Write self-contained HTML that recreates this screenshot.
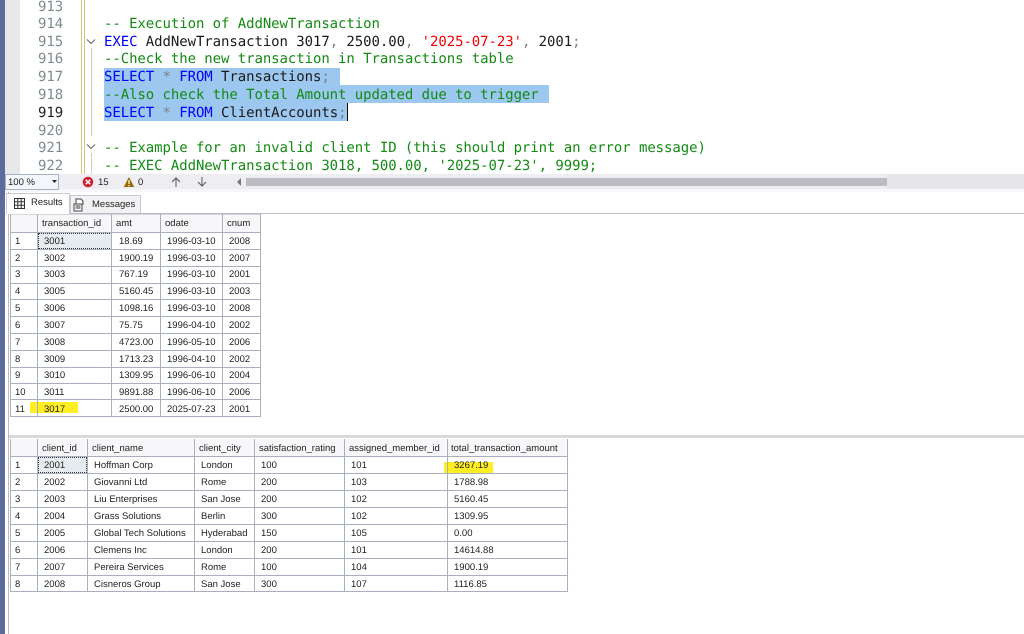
<!DOCTYPE html>
<html><head><meta charset="utf-8"><style>
html,body{margin:0;padding:0;background:#fff}
#p{position:relative;width:1024px;height:634px;overflow:hidden;background:#fff;font-family:"Liberation Sans",sans-serif;filter:blur(.3px);text-rendering:geometricPrecision}
.a{position:absolute}
.c{position:absolute;font:14px/18px "DejaVu Sans Mono","Liberation Mono",monospace;white-space:pre;left:104px;letter-spacing:-.07px;margin-top:1px}
.n{position:absolute;font:14px/18px "DejaVu Sans Mono",monospace;color:#7f8a8f;left:38px;letter-spacing:-.07px;margin-top:1px}
.g{color:#148a14}.b{color:#0000ff}.k{color:#1a1a1a}.s{color:#f00000}.h{color:#808080}
.t{position:absolute;font-size:9.5px;line-height:17px;color:#222;white-space:pre;margin-top:1px}
.l{position:absolute;background:#a8b0be}
.sel{position:absolute;background:#9cc7ef}
</style></head><body><div id="p">
<div class="a" style="left:0;top:0;width:5px;height:634px;background:#5b6b9b"></div>
<div class="a" style="left:5px;top:0;width:15px;height:174px;background:#e8e8ea"></div>
<div class="a" style="left:8px;top:174px;width:1px;height:460px;background:#b8bcc4"></div>
<div class="a" style="left:81px;top:0;width:1px;height:174px;background:#d9c778"></div>
<div class="a" style="left:84px;top:0;width:1px;height:174px;background:#d9c778"></div>

<div class="sel" style="left:104px;top:68px;width:236px;height:17px"></div>
<div class="sel" style="left:104px;top:85px;width:445px;height:18px"></div>
<div class="sel" style="left:104px;top:103px;width:244px;height:18px"></div>
<div class="a" style="left:347px;top:103px;width:1px;height:18px;background:#111"></div>

<div class="n" style="top:-3px">913</div>
<div class="n" style="top:14px">914</div>
<div class="n" style="top:32px">915</div>
<div class="n" style="top:49px">916</div>
<div class="n" style="top:67px">917</div>
<div class="n" style="top:85px">918</div>
<div class="n" style="top:103px;color:#222">919</div>
<div class="n" style="top:121px">920</div>
<div class="n" style="top:138px">921</div>
<div class="n" style="top:156px">922</div>

<svg class="a" style="left:86px;top:37px" width="10" height="10"><path d="M1 2.5l4 4 4-4" fill="none" stroke="#666"/></svg>
<svg class="a" style="left:86px;top:142px" width="10" height="10"><path d="M1 2.5l4 4 4-4" fill="none" stroke="#666"/></svg>
<div class="a" style="left:91px;top:48px;width:1px;height:88px;background:#ccc"></div>
<div class="a" style="left:91px;top:153px;width:1px;height:21px;background:#ccc"></div>

<div class="c g" style="top:14px">-- Execution of AddNewTransaction</div>
<div class="c k" style="top:32px"><span class="b">EXEC</span> AddNewTransaction 3017<span class="h">,</span> 2500.00<span class="h">,</span> <span class="s">'2025-07-23'</span><span class="h">,</span> 2001<span class="h">;</span></div>
<div class="c g" style="top:49px">--Check the new transaction in Transactions table</div>
<div class="c k" style="top:67px"><span class="b">SELECT</span> <span class="h">*</span> <span class="b">FROM</span> Transactions<span class="h">;</span></div>
<div class="c g" style="top:85px">--Also check the Total Amount updated due to trigger</div>
<div class="c k" style="top:103px"><span class="b">SELECT</span> <span class="h">*</span> <span class="b">FROM</span> ClientAccounts<span class="h">;</span></div>
<div class="c g" style="top:138px">-- Example for an invalid client ID (this should print an error message)</div>
<div class="c g" style="top:156px">-- EXEC AddNewTransaction 3018, 500.00, '2025-07-23', 9999;</div>

<!-- status bar -->
<div class="a" style="left:5px;top:174px;width:1019px;height:15px;background:#eeeef2"></div>
<div class="a" style="left:5px;top:189px;width:1019px;height:3px;background:#f6f6fb"></div>
<div class="a" style="left:5px;top:174px;width:54px;height:16px;background:#f4f6fb;border:1px solid #a9b2c4;box-sizing:border-box"></div>
<div class="t" style="left:8px;top:174px;line-height:16px">100 %</div>
<svg class="a" style="left:51px;top:179px" width="8" height="6"><path d="M1 1h5L3.5 4z" fill="#222"/></svg>
<svg class="a" style="left:82px;top:176px" width="12" height="12"><circle cx="6" cy="6" r="5.3" fill="#d4212f"/><path d="M3.8 3.8l4.4 4.4M8.2 3.8L3.8 8.2" stroke="#fff" stroke-width="1.5"/></svg>
<div class="t" style="left:98px;top:174px;line-height:16px">15</div>
<svg class="a" style="left:123px;top:176px" width="12" height="12"><path d="M6 1l5.2 10H.8z" fill="#9a6a00"/><path d="M6 4v4M6 9v1.3" stroke="#fff" stroke-width="1.2"/></svg>
<div class="t" style="left:138px;top:174px;line-height:16px">0</div>
<svg class="a" style="left:170px;top:176px" width="12" height="12"><path d="M6 11V2M2 6l4-4 4 4" fill="none" stroke="#555"/></svg>
<svg class="a" style="left:196px;top:176px" width="12" height="12"><path d="M6 1v9M2 6l4 4 4-4" fill="none" stroke="#555"/></svg>
<svg class="a" style="left:236px;top:178px" width="6" height="8"><path d="M5 0v8L1 4z" fill="#777"/></svg>
<div class="a" style="left:246px;top:178px;width:641px;height:8px;background:#bcbcc2"></div>
<div class="a" style="left:887px;top:174px;width:137px;height:15px;background:#e6e6ea"></div>

<!-- tabs -->
<div class="a" style="left:9px;top:213px;width:1015px;height:1px;background:#b8bcc4"></div>
<div class="a" style="left:6px;top:193px;width:64px;height:21px;background:#fff;border:1px solid #c6cad2;border-bottom:0;box-sizing:border-box"></div>
<div class="a" style="left:70px;top:195px;width:71px;height:18px;background:#f2f2f4;border:1px solid #c6cad2;border-bottom:0;box-sizing:border-box"></div>
<svg class="a" style="left:13px;top:197px" width="13" height="13"><path d="M1.5 1.5h10v10h-10zM1.5 4.8h10M1.5 8.2h10M4.8 1.5v10M8.2 1.5v10" fill="none" stroke="#333"/></svg>
<svg class="a" style="left:73px;top:198px" width="12" height="14"><path d="M3 1h5l2 2v3H3zM1 6h8v7H1z" fill="#fff" stroke="#444"/><path d="M2.5 8h5M2.5 10h5" stroke="#333"/></svg>
<div class="t" style="left:31px;top:193px">Results</div>
<div class="t" style="left:92px;top:195px">Messages</div>

<!-- Table 1 -->
<div class="a" style="left:10px;top:214px;width:251px;height:18px;background:#f7f7f9"></div>
<div class="a" style="left:38px;top:233px;width:74px;height:16px;background:#e6ebef;outline:1px dotted #333;outline-offset:-1px"></div>
<div class="a" style="left:30px;top:402px;width:48px;height:11px;background:#ffee22"></div>
<div id="t1">
<div class="l" style="left:10px;top:214px;width:251px;height:1px;background:#d4d8de"></div>
<div class="l" style="left:10px;top:232px;width:251px;height:1px"></div>
<div class="l" style="left:10px;top:249px;width:251px;height:1px"></div>
<div class="l" style="left:10px;top:266px;width:251px;height:1px"></div>
<div class="l" style="left:10px;top:283px;width:251px;height:1px"></div>
<div class="l" style="left:10px;top:299px;width:251px;height:1px"></div>
<div class="l" style="left:10px;top:316px;width:251px;height:1px"></div>
<div class="l" style="left:10px;top:333px;width:251px;height:1px"></div>
<div class="l" style="left:10px;top:350px;width:251px;height:1px"></div>
<div class="l" style="left:10px;top:367px;width:251px;height:1px"></div>
<div class="l" style="left:10px;top:383px;width:251px;height:1px"></div>
<div class="l" style="left:10px;top:399px;width:251px;height:1px"></div>
<div class="l" style="left:10px;top:416px;width:251px;height:1px"></div>
<div class="l" style="left:10px;top:214px;width:1px;height:203px"></div>
<div class="l" style="left:37px;top:214px;width:1px;height:203px"></div>
<div class="l" style="left:111px;top:214px;width:1px;height:203px"></div>
<div class="l" style="left:160px;top:214px;width:1px;height:203px"></div>
<div class="l" style="left:222px;top:214px;width:1px;height:203px"></div>
<div class="l" style="left:260px;top:214px;width:1px;height:203px"></div>
</div>
<div class="t" style="left:42px;top:214px">transaction_id</div><div class="t" style="left:116px;top:214px">amt</div><div class="t" style="left:165px;top:214px">odate</div><div class="t" style="left:227px;top:214px">cnum</div>
<div class="t" style="left:15px;top:232px">1</div><div class="t" style="left:44px;top:232px">3001</div><div class="t" style="left:119px;top:232px">18.69</div><div class="t" style="left:167px;top:232px">1996-03-10</div><div class="t" style="left:229px;top:232px">2008</div>
<div class="t" style="left:15px;top:249px">2</div><div class="t" style="left:44px;top:249px">3002</div><div class="t" style="left:119px;top:249px">1900.19</div><div class="t" style="left:167px;top:249px">1996-03-10</div><div class="t" style="left:229px;top:249px">2007</div>
<div class="t" style="left:15px;top:265px">3</div><div class="t" style="left:44px;top:265px">3003</div><div class="t" style="left:119px;top:265px">767.19</div><div class="t" style="left:167px;top:265px">1996-03-10</div><div class="t" style="left:229px;top:265px">2001</div>
<div class="t" style="left:15px;top:282px">4</div><div class="t" style="left:44px;top:282px">3005</div><div class="t" style="left:119px;top:282px">5160.45</div><div class="t" style="left:167px;top:282px">1996-03-10</div><div class="t" style="left:229px;top:282px">2003</div>
<div class="t" style="left:15px;top:299px">5</div><div class="t" style="left:44px;top:299px">3006</div><div class="t" style="left:119px;top:299px">1098.16</div><div class="t" style="left:167px;top:299px">1996-03-10</div><div class="t" style="left:229px;top:299px">2008</div>
<div class="t" style="left:15px;top:316px">6</div><div class="t" style="left:44px;top:316px">3007</div><div class="t" style="left:119px;top:316px">75.75</div><div class="t" style="left:167px;top:316px">1996-04-10</div><div class="t" style="left:229px;top:316px">2002</div>
<div class="t" style="left:15px;top:333px">7</div><div class="t" style="left:44px;top:333px">3008</div><div class="t" style="left:119px;top:333px">4723.00</div><div class="t" style="left:167px;top:333px">1996-05-10</div><div class="t" style="left:229px;top:333px">2006</div>
<div class="t" style="left:15px;top:350px">8</div><div class="t" style="left:44px;top:350px">3009</div><div class="t" style="left:119px;top:350px">1713.23</div><div class="t" style="left:167px;top:350px">1996-04-10</div><div class="t" style="left:229px;top:350px">2002</div>
<div class="t" style="left:15px;top:366px">9</div><div class="t" style="left:44px;top:366px">3010</div><div class="t" style="left:119px;top:366px">1309.95</div><div class="t" style="left:167px;top:366px">1996-06-10</div><div class="t" style="left:229px;top:366px">2004</div>
<div class="t" style="left:15px;top:383px">10</div><div class="t" style="left:44px;top:383px">3011</div><div class="t" style="left:119px;top:383px">9891.88</div><div class="t" style="left:167px;top:383px">1996-06-10</div><div class="t" style="left:229px;top:383px">2006</div>
<div class="t" style="left:15px;top:400px">11</div><div class="t" style="left:44px;top:400px">3017</div><div class="t" style="left:119px;top:400px">2500.00</div><div class="t" style="left:167px;top:400px">2025-07-23</div><div class="t" style="left:229px;top:400px">2001</div>

<!-- splitter -->
<div class="a" style="left:9px;top:435px;width:1015px;height:3px;background:#d8d8d8"></div>

<!-- Table 2 -->
<div class="a" style="left:10px;top:439px;width:558px;height:17px;background:#f7f7f9"></div>
<div class="a" style="left:38px;top:457px;width:49px;height:16px;background:#e6ebef;outline:1px dotted #333;outline-offset:-1px"></div>
<div class="a" style="left:444px;top:462px;width:49px;height:11px;background:#ffee22"></div>
<div class="l" style="left:10px;top:456px;width:558px;height:1px"></div>
<div class="l" style="left:10px;top:473px;width:558px;height:1px"></div>
<div class="l" style="left:10px;top:490px;width:558px;height:1px"></div>
<div class="l" style="left:10px;top:507px;width:558px;height:1px"></div>
<div class="l" style="left:10px;top:524px;width:558px;height:1px"></div>
<div class="l" style="left:10px;top:541px;width:558px;height:1px"></div>
<div class="l" style="left:10px;top:558px;width:558px;height:1px"></div>
<div class="l" style="left:10px;top:575px;width:558px;height:1px"></div>
<div class="l" style="left:10px;top:591px;width:558px;height:1px"></div>
<div class="l" style="left:10px;top:439px;width:1px;height:153px"></div>
<div class="l" style="left:37px;top:439px;width:1px;height:153px"></div>
<div class="l" style="left:87px;top:439px;width:1px;height:153px"></div>
<div class="l" style="left:194px;top:439px;width:1px;height:153px"></div>
<div class="l" style="left:254px;top:439px;width:1px;height:153px"></div>
<div class="l" style="left:344px;top:439px;width:1px;height:153px"></div>
<div class="l" style="left:447px;top:439px;width:1px;height:153px"></div>
<div class="l" style="left:567px;top:439px;width:1px;height:153px"></div>

<div class="t" style="left:42px;top:439px">client_id</div><div class="t" style="left:92px;top:439px">client_name</div><div class="t" style="left:199px;top:439px">client_city</div><div class="t" style="left:259px;top:439px">satisfaction_rating</div><div class="t" style="left:349px;top:439px">assigned_member_id</div><div class="t" style="left:451px;top:439px">total_transaction_amount</div>
<div class="t" style="left:15px;top:456px">1</div><div class="t" style="left:44px;top:456px">2001</div><div class="t" style="left:94px;top:456px">Hoffman Corp</div><div class="t" style="left:201px;top:456px">London</div><div class="t" style="left:261px;top:456px">100</div><div class="t" style="left:351px;top:456px">101</div><div class="t" style="left:454px;top:456px">3267.19</div>
<div class="t" style="left:15px;top:473px">2</div><div class="t" style="left:44px;top:473px">2002</div><div class="t" style="left:94px;top:473px">Giovanni Ltd</div><div class="t" style="left:201px;top:473px">Rome</div><div class="t" style="left:261px;top:473px">200</div><div class="t" style="left:351px;top:473px">103</div><div class="t" style="left:454px;top:473px">1788.98</div>
<div class="t" style="left:15px;top:490px">3</div><div class="t" style="left:44px;top:490px">2003</div><div class="t" style="left:94px;top:490px">Liu Enterprises</div><div class="t" style="left:201px;top:490px">San Jose</div><div class="t" style="left:261px;top:490px">200</div><div class="t" style="left:351px;top:490px">102</div><div class="t" style="left:454px;top:490px">5160.45</div>
<div class="t" style="left:15px;top:507px">4</div><div class="t" style="left:44px;top:507px">2004</div><div class="t" style="left:94px;top:507px">Grass Solutions</div><div class="t" style="left:201px;top:507px">Berlin</div><div class="t" style="left:261px;top:507px">300</div><div class="t" style="left:351px;top:507px">102</div><div class="t" style="left:454px;top:507px">1309.95</div>
<div class="t" style="left:15px;top:524px">5</div><div class="t" style="left:44px;top:524px">2005</div><div class="t" style="left:94px;top:524px">Global Tech Solutions</div><div class="t" style="left:201px;top:524px">Hyderabad</div><div class="t" style="left:261px;top:524px">150</div><div class="t" style="left:351px;top:524px">105</div><div class="t" style="left:454px;top:524px">0.00</div>
<div class="t" style="left:15px;top:541px">6</div><div class="t" style="left:44px;top:541px">2006</div><div class="t" style="left:94px;top:541px">Clemens Inc</div><div class="t" style="left:201px;top:541px">London</div><div class="t" style="left:261px;top:541px">200</div><div class="t" style="left:351px;top:541px">101</div><div class="t" style="left:454px;top:541px">14614.88</div>
<div class="t" style="left:15px;top:558px">7</div><div class="t" style="left:44px;top:558px">2007</div><div class="t" style="left:94px;top:558px">Pereira Services</div><div class="t" style="left:201px;top:558px">Rome</div><div class="t" style="left:261px;top:558px">100</div><div class="t" style="left:351px;top:558px">104</div><div class="t" style="left:454px;top:558px">1900.19</div>
<div class="t" style="left:15px;top:575px">8</div><div class="t" style="left:44px;top:575px">2008</div><div class="t" style="left:94px;top:575px">Cisneros Group</div><div class="t" style="left:201px;top:575px">San Jose</div><div class="t" style="left:261px;top:575px">300</div><div class="t" style="left:351px;top:575px">107</div><div class="t" style="left:454px;top:575px">1116.85</div>
</div></body></html>
